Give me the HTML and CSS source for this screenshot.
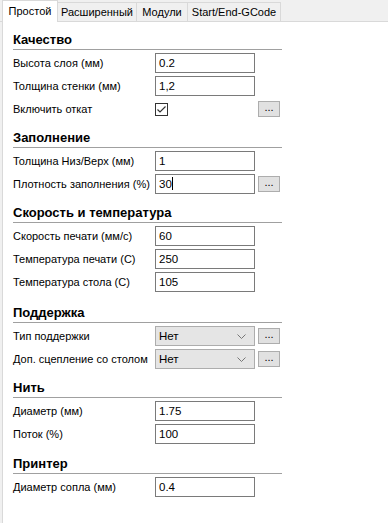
FILE: index.html
```html
<!DOCTYPE html>
<html lang="ru">
<head>
    <meta charset="UTF-8">
    <title>Настройки печати</title>
    <link rel="stylesheet" href="styles.css">
</head>
<body>
<div class="tabs">
    <div class="tab active">Простой</div>
    <div class="tab">Расширенный</div>
    <div class="tab">Модули</div>
    <div class="tab">Start/End-GCode</div>
</div>
<div class="pane">
    <div class="group g1">
        <h3>Качество</h3>
        <div class="grid">
            <label>Высота слоя (мм)</label><div class="field">0.2</div><span></span>
            <label>Толщина стенки (мм)</label><div class="field">1,2</div><span></span>
            <label>Включить откат</label>
            <div class="check"><svg width="13" height="13" viewBox="0 0 13 13"><rect x="0.5" y="0.5" width="12" height="12" fill="#fff" stroke="#333"/><path d="M2.5 6.5 L5 9 L10.5 3.5" fill="none" stroke="#333" stroke-width="1.2"/></svg></div>
            <div class="btn">...</div>
        </div>
    </div>
    <div class="group g2">
        <h3>Заполнение</h3>
        <div class="grid">
            <label>Толщина Низ/Верх (мм)</label><div class="field">1</div><span></span>
            <label>Плотность заполнения (%)</label><div class="field">30<i class="caret"></i></div><div class="btn">...</div>
        </div>
    </div>
    <div class="group g3">
        <h3>Скорость и температура</h3>
        <div class="grid">
            <label>Скорость печати (мм/с)</label><div class="field">60</div><span></span>
            <label>Температура печати (С)</label><div class="field">250</div><span></span>
            <label>Температура стола (С)</label><div class="field">105</div><span></span>
        </div>
    </div>
    <div class="group g4">
        <h3>Поддержка</h3>
        <div class="grid">
            <label>Тип поддержки</label>
            <div class="combo">Нет<svg width="9" height="5" viewBox="0 0 9 5"><path d="M0.5 0.5 L4.5 4.5 L8.5 0.5" fill="none" stroke="#777"/></svg></div>
            <div class="btn">...</div>
            <label>Доп. сцепление со столом</label>
            <div class="combo">Нет<svg width="9" height="5" viewBox="0 0 9 5"><path d="M0.5 0.5 L4.5 4.5 L8.5 0.5" fill="none" stroke="#777"/></svg></div>
            <div class="btn">...</div>
        </div>
    </div>
    <div class="group">
        <h3>Нить</h3>
        <div class="grid">
            <label>Диаметр (мм)</label><div class="field">1.75</div><span></span>
            <label>Поток (%)</label><div class="field">100</div><span></span>
        </div>
    </div>
    <div class="group">
        <h3>Принтер</h3>
        <div class="grid">
            <label>Диаметр сопла (мм)</label><div class="field">0.4</div><span></span>
        </div>
    </div>
</div>
</body>
</html>
```
FILE: styles.css
```css
html,body{margin:0;padding:0;height:100%;}
body{background:#f0f0f0;font-family:"Liberation Sans",Arial,sans-serif;font-size:11px;color:#000;overflow:hidden;}
.tabs{display:flex;height:22px;padding-left:2px;box-sizing:border-box;border-bottom:1px solid #d9d9d9;align-items:flex-end;}
.tab{height:19px;line-height:18px;border:1px solid #d9d9d9;border-bottom:none;border-left:none;background:#f0f0f0;box-sizing:border-box;font-size:11px;white-space:nowrap;text-align:center;}
.tab.active{height:22px;line-height:20px;background:#fff;border-left:1px solid #d9d9d9;margin-bottom:-1px;width:56px;}
.tab:nth-child(2){width:79px;}
.tab:nth-child(3){width:51px;}
.tab:nth-child(4){width:93px;}
.pane{background:#fff;margin-left:2px;border-left:1px solid #d9d9d9;height:501px;padding:10px 0 0 10px;box-sizing:border-box;}
.group{width:269px;margin-bottom:12px;}
.group.g1{margin-bottom:11px;}
.group.g2{margin-bottom:11px;}
.group.g3{margin-bottom:13px;}
.group.g4{margin-bottom:11px;}
h3{margin:0 0 3px 0;font-size:13px;font-weight:bold;line-height:16px;padding-bottom:1px;border-bottom:1px solid #a0a0a0;}
.grid{display:grid;grid-template-columns:139px 100px 22px;column-gap:3px;row-gap:3px;align-items:center;}
label{line-height:20px;white-space:nowrap;}
.field{height:20px;border:1px solid #7a7a7a;box-sizing:border-box;line-height:18px;padding-left:3px;font-size:11.5px;}
.caret{display:inline-block;width:1px;height:13px;background:#000;vertical-align:-2px;}
.check{height:20px;display:flex;align-items:center;}
.btn{height:16px;border:1px solid #adadad;background:#e1e1e1;box-sizing:border-box;text-align:center;line-height:11px;font-size:11px;}
.combo{height:20px;border:1px solid #adadad;background:#e5e5e5;box-sizing:border-box;line-height:18px;padding:0 8px 0 3px;display:flex;justify-content:space-between;align-items:center;font-size:11.5px;}
```
